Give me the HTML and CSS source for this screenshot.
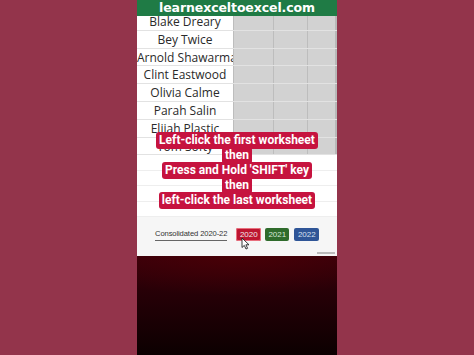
FILE: index.html
```html
<!DOCTYPE html>
<html>
<head>
<meta charset="utf-8">
<link rel="stylesheet" href="styles.css">
</head>
<body>
<div class="page">
  <main class="phone">
    <div class="brand">learnexceltoexcel.com</div>
    <div class="sheet">
      <div class="grid">
        <div class="row"><div class="name">Blake Dreary</div><div class="c c1"></div><div class="c c2"></div><div class="c c3"></div></div>
        <div class="row"><div class="name">Bey Twice</div><div class="c c1"></div><div class="c c2"></div><div class="c c3"></div></div>
        <div class="row"><div class="name">Arnold Shawarma</div><div class="c c1"></div><div class="c c2"></div><div class="c c3"></div></div>
        <div class="row"><div class="name">Clint Eastwood</div><div class="c c1"></div><div class="c c2"></div><div class="c c3"></div></div>
        <div class="row"><div class="name">Olivia Calme</div><div class="c c1"></div><div class="c c2"></div><div class="c c3"></div></div>
        <div class="row"><div class="name">Parah Salin</div><div class="c c1"></div><div class="c c2"></div><div class="c c3"></div></div>
        <div class="row"><div class="name">Elijah Plastic</div><div class="c c1"></div><div class="c c2"></div><div class="c c3"></div></div>
        <div class="row"><div class="name">Tom Softy</div><div class="c c1"></div><div class="c c2"></div><div class="c c3"></div></div>
        <div class="row blank"></div>
        <div class="row blank"></div>
        <div class="row blank"></div>
        <div class="row blank"></div>
      </div>
      <div class="tabs">
        <span class="tab-main">Consolidated 2020-22</span>
        <span class="tab red">2020</span>
        <span class="tab green">2021</span>
        <span class="tab blue">2022</span>
        <svg class="cursor" width="9" height="13" viewBox="0 0 9 13"><path d="M1 1 L1 10.5 L3.3 8.4 L5 12 L6.6 11.3 L4.9 7.8 L8 7.8 Z" fill="#fff" stroke="#222" stroke-width="0.9" stroke-linejoin="round"/></svg>
        <span class="scroll"></span>
      </div>
      <div class="overlay">
        <span class="cap">Left-click the first worksheet</span>
        <span class="cap">then</span>
        <span class="cap">Press and Hold 'SHIFT' key</span>
        <span class="cap">then</span>
        <span class="cap">left-click the last worksheet</span>
      </div>
    </div>
    <div class="dark"></div>
  </main>
</div>
</body>
</html>
```
FILE: styles.css
```css
html, body {
  margin: 0;
  padding: 0;
}
body {
  width: 474px;
  height: 355px;
  overflow: hidden;
  background: #93344b;
}
.page {
  display: flex;
  height: 355px;
}
.phone {
  margin-left: 137px;
  width: 200px;
  display: flex;
  flex-direction: column;
  height: 355px;
}
.brand {
  position: relative;
  z-index: 2;
  height: 16px;
  background: #1f7b45;
  color: #fff;
  font-family: "DejaVu Sans", sans-serif;
  font-weight: bold;
  font-size: 12.5px;
  line-height: 16px;
  text-align: center;
  letter-spacing: -0.1px;
}
.sheet {
  position: relative;
  height: 240px;
  background: #fff;
  display: flex;
  flex-direction: column;
  overflow: hidden;
}
.grid {
  margin-top: -3px;
  display: flex;
  flex-direction: column;
}
.row {
  display: flex;
  height: 17.8px;
  box-sizing: border-box;
  border-bottom: 1px solid #e2e2e2;
}
.row.blank {
  height: 15.5px;
  border-bottom: 1px solid #eeeeee;
}
.name {
  width: 96px;
  flex: none;
  font-family: "Open Sans", sans-serif;
  font-size: 12px;
  line-height: 17px;
  color: #2a2a2a;
  text-align: center;
  white-space: nowrap;
  overflow: hidden;
}
.c {
  background: #d2d2d2;
  border-left: 1px solid #bdbdbd;
  box-sizing: border-box;
}
.c1 { width: 40px; }
.c2 { width: 34px; }
.c3 { width: 30px; border-right: 2px solid #b8b8b8; }
.tabs {
  flex: 1;
  background: #f6f6f6;
  display: flex;
  align-items: flex-start;
  padding: 11px 0 0 18px;
  position: relative;
  font-family: "Liberation Sans", sans-serif;
}
.tab-main {
  font-size: 7.6px;
  color: #333;
  line-height: 12px;
  border-bottom: 1.5px solid #666;
  margin-right: 9px;
  letter-spacing: -0.1px;
}
.tab {
  width: 25px;
  height: 13px;
  border-radius: 2px;
  color: #f0e8ea;
  font-size: 8px;
  line-height: 13px;
  text-align: center;
  margin-right: 4px;
}
.tab.red { background: #bd1530; box-shadow: inset 0 0 0 1px #e8707e; }
.tab.green { background: #2f6b2c; width: 24px; margin-right: 5px; color: #d8e8d8; }
.tab.blue { background: #2f5597; color: #d8e0f0; }
.cursor {
  position: absolute;
  left: 104px;
  top: 20px;
}
.scroll {
  position: absolute;
  right: 2px;
  bottom: 2px;
  width: 18px;
  height: 2px;
  background: #bbb;
}
.overlay {
  position: absolute;
  left: 0;
  right: 0;
  top: 117px;
  display: flex;
  flex-direction: column;
  align-items: center;
}
.cap {
  background: #c6133f;
  color: #fff;
  font-family: "Roboto", "Liberation Sans", sans-serif;
  font-weight: bold;
  font-size: 12px;
  line-height: 15px;
  padding: 1px 3px;
  margin: -1px 0;
  border-radius: 3px;
}
.dark {
  flex: 1;
  background:
    radial-gradient(ellipse 110% 50% at 50% 0%, rgba(80,0,6,0.7), rgba(50,0,4,0) 80%),
    linear-gradient(#36000a, #0c0001);
}
```
